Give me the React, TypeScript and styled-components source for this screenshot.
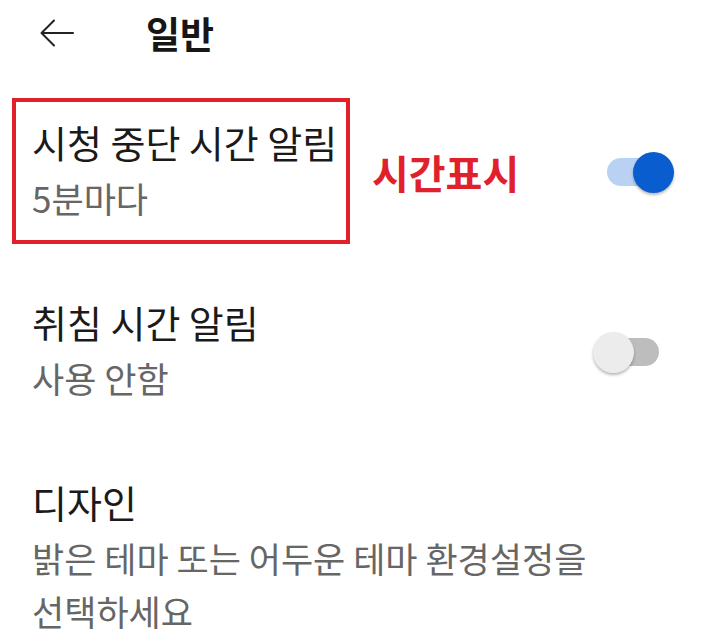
import React from "react"
import styled, { createGlobalStyle } from "styled-components"

const Global = createGlobalStyle`
body{
  margin:0;
  background:#fff;
  font-family:"Noto Sans CJK KR","Noto Sans",sans-serif;
}
`
const Page = styled.div`
width:720px;
height:637px;
overflow:hidden;
background:#fff;
`
const Header = styled.div`
display:flex;
align-items:center;
height:44px;
padding:11px 0 0 40px;
`
const BackBtn = styled.button`
display:flex;
padding:0;
border:none;
background:none;
color:#222;
`
const HeaderTitle = styled.h1`
margin:0 0 0 72px;
font-size:37px;
line-height:44px;
font-weight:700;
color:#161616;
`
const List = styled.div`
padding-top:26px;
`
const Row = styled.div`
display:flex;
align-items:center;
padding:38px 61px 37px 32px;
`
const TextBlock = styled.div<{ $marked?: boolean }>`
flex:${p => (p.$marked ? "none" : "1")};
${p =>
  p.$marked &&
  `
  box-sizing:border-box;
  width:338px;
  margin:-21px 0 -20px -20px;
  padding:17px 8px 16px 16px;
  border:4px solid #e0202b;
  `}
`
const Title = styled.div`
font-size:38px;
line-height:46px;
color:#1a1a1a;
white-space:nowrap;
`
const Sub = styled.div`
margin-top:6px;
font-size:35px;
line-height:53px;
color:#666;
word-break:keep-all;
`
const Note = styled.div`
flex:1;
margin-left:22px;
font-size:40px;
font-weight:700;
color:#e0202b;
`
const Track = styled.div<{ $on: boolean }>`
position:relative;
width:52px;
height:28px;
border-radius:14px;
background:${p => (p.$on ? "#b9d2f4" : "#bdbdbd")};
`
const Thumb = styled.div<{ $on: boolean }>`
position:absolute;
top:-6px;
left:${p => (p.$on ? "26px" : "-14px")};
width:41px;
height:41px;
border-radius:50%;
background:${p => (p.$on ? "#0a5dcf" : "#ececec")};
box-shadow:0 2px 3px rgba(0,0,0,0.28);
`

const Switch = ({ on }: { on: boolean }) => (
  <Track $on={on}>
    <Thumb $on={on} />
  </Track>
)

const App = () => {
  return (
    <Page>
      <Global />
      <Header>
        <BackBtn aria-label="back">
          <svg width="34" height="28" viewBox="0 0 34 28" fill="none" stroke="currentColor" strokeWidth="2" strokeLinecap="round" strokeLinejoin="round">
            <path d="M33 14H2" />
            <path d="M14 1.5L1.5 14L14 26.5" />
          </svg>
        </BackBtn>
        <HeaderTitle>일반</HeaderTitle>
      </Header>
      <List>
        <Row>
          <TextBlock $marked>
            <Title>시청 중단 시간 알림</Title>
            <Sub>5분마다</Sub>
          </TextBlock>
          <Note>시간표시</Note>
          <Switch on={true} />
        </Row>
        <Row>
          <TextBlock>
            <Title>취침 시간 알림</Title>
            <Sub>사용 안함</Sub>
          </TextBlock>
          <Switch on={false} />
        </Row>
        <Row>
          <TextBlock>
            <Title>디자인</Title>
            <Sub>밝은 테마 또는 어두운 테마 환경설정을 선택하세요</Sub>
          </TextBlock>
        </Row>
      </List>
    </Page>
  )
}
export default App
